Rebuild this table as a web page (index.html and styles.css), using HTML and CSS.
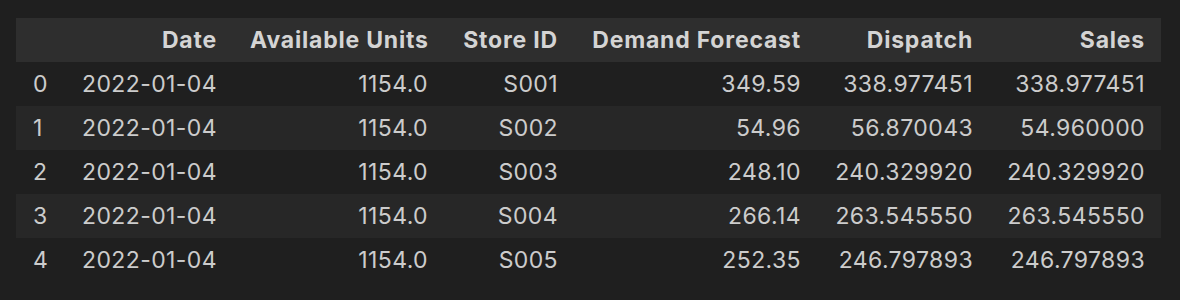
FILE: index.html
```html
<!DOCTYPE html>
<html>
<head>
<meta charset="utf-8">
<link rel="stylesheet" href="styles.css">
</head>
<body>
<div class="wrap">
<table class="df">
  <colgroup>
    <col class="c-idx"><col class="c-date"><col class="c-units"><col class="c-store"><col class="c-demand"><col class="c-disp"><col class="c-sales">
  </colgroup>
  <thead>
    <tr><th></th><th>Date</th><th>Available Units</th><th>Store ID</th><th>Demand Forecast</th><th>Dispatch</th><th>Sales</th></tr>
  </thead>
  <tbody>
    <tr><th>0</th><td>2022-01-04</td><td>1154.0</td><td>S001</td><td>349.59</td><td>338.977451</td><td>338.977451</td></tr>
    <tr><th>1</th><td>2022-01-04</td><td>1154.0</td><td>S002</td><td>54.96</td><td>56.870043</td><td>54.960000</td></tr>
    <tr><th>2</th><td>2022-01-04</td><td>1154.0</td><td>S003</td><td>248.10</td><td>240.329920</td><td>240.329920</td></tr>
    <tr><th>3</th><td>2022-01-04</td><td>1154.0</td><td>S004</td><td>266.14</td><td>263.545550</td><td>263.545550</td></tr>
    <tr><th>4</th><td>2022-01-04</td><td>1154.0</td><td>S005</td><td>252.35</td><td>246.797893</td><td>246.797893</td></tr>
  </tbody>
</table>
</div>
</body>
</html>
```
FILE: styles.css
```css
html, body {
  margin: 0;
  padding: 0;
  background: #1f1f1f;
  height: 100%;
}
.wrap {
  padding: 18px 16px 0 16px;
}
.df {
  border-collapse: collapse;
  border-spacing: 0;
  table-layout: fixed;
  width: 1145px;
  font-family: Inter, "Noto Sans", sans-serif;
  font-size: 23px;
  letter-spacing: 0.4px;
  color: #cccccc;
}
.c-idx { width: 47px; }
.c-date { width: 170px; }
.c-units { width: 211px; }
.c-store { width: 130px; }
.c-demand { width: 243px; }
.c-disp { width: 172px; }
.c-sales { width: 172px; }
.df th, .df td {
  height: 44px;
  padding: 0 16px 0 17px;
  text-align: right;
  white-space: nowrap;
  box-sizing: border-box;
}
.df thead tr {
  background: #2e2e2e;
}
.df thead th {
  font-weight: 700;
  letter-spacing: 0.8px;
  color: #d4d4d4;
}
.df tbody th {
  font-weight: 400;
  text-align: left;
}
.df tbody tr:nth-child(even) {
  background: #272727;
}
```
